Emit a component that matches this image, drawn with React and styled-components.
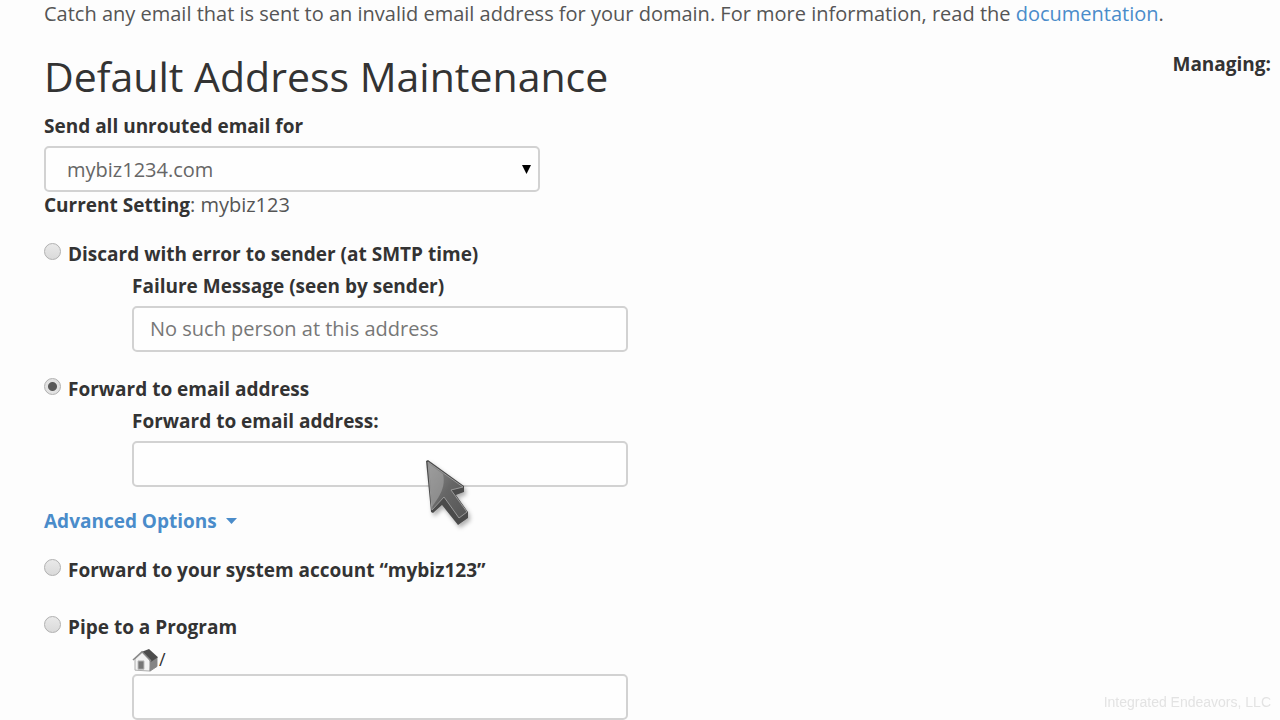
import { useState } from 'react'
import styled, { createGlobalStyle } from 'styled-components'

const GlobalStyle = createGlobalStyle`
  * {
    box-sizing: border-box;
  }

  body {
    margin: 0;
    background: #fdfdfd;
    color: #333333;
    font-family: 'Open Sans', 'Noto Sans', sans-serif;
    font-size: 20px;
    line-height: 26px;
  }
`

const Page = styled.main`
  padding: 1px 9px 0 44px;
`

const Intro = styled.p`
  margin: 0;
  color: #555555;
`

const Link = styled.a`
  color: #4a8cca;
  text-decoration: none;
`

const Header = styled.header`
  display: flex;
  justify-content: space-between;
  align-items: flex-start;
  padding-top: 24px;
`

const Title = styled.h1`
  margin: 0;
  font-size: 41px;
  font-weight: 400;
  line-height: 50px;
`

const Managing = styled.strong`
  font-size: 19px;
  font-weight: 700;
`

const Form = styled.form`
  display: flex;
  flex-direction: column;
  padding-top: 12px;
`

const Label = styled.label`
  display: block;
  font-size: 19px;
  font-weight: 700;
`

const Field = styled.div`
  display: flex;
  flex-direction: column;
  gap: 7px;
  width: 100%;
  max-width: 496px;
`

const Nested = styled(Field)`
  gap: ${props => props.$tight ? '2px' : '7px'};
  margin: 6px 0 0 88px;
`

const SelectBox = styled.div`
  display: grid;
  align-items: center;

  > * {
    grid-area: 1 / 1;
  }

  svg {
    justify-self: end;
    margin-right: 9px;
    pointer-events: none;
  }
`

const Select = styled.select`
  appearance: none;
  width: 100%;
  height: 46px;
  padding: 2px 21px 0;
  border: 2px solid #d2d2d2;
  border-radius: 5px;
  background: #fefefe;
  color: #666666;
  font: inherit;
`

const Input = styled.input`
  width: 100%;
  height: 46px;
  padding: 0 16px 2px;
  border: 2px solid #d2d2d2;
  border-radius: 5px;
  background: #fefefe;
  color: #777777;
  font: inherit;
  outline: none;
`

const Setting = styled.p`
  margin: 0;
  color: #555555;

  strong {
    color: #333333;
    font-size: 19px;
  }
`

const Option = styled.div`
  margin-top: ${props => props.$gap}px;
`

const OptionHead = styled.div`
  display: flex;
  align-items: flex-start;
  gap: 7px;
`

const Radio = styled.input`
  appearance: none;
  flex: none;
  width: 17px;
  height: 17px;
  margin: 2px 0 0;
  border: 1px solid #b0b0b0;
  border-radius: 50%;
  background: linear-gradient(#e9e9e9, #dadada);

  &:checked {
    background: radial-gradient(circle, #5a5a5a 0 4px, #e2e2e2 5px);
  }
`

const Advanced = styled.button`
  display: flex;
  align-items: center;
  gap: 9px;
  align-self: flex-start;
  margin-top: 21px;
  padding: 0;
  border: 0;
  background: none;
  color: #4a8cca;
  font: inherit;
  font-size: 19px;
  font-weight: 700;
`

const Home = styled.div`
  display: flex;
  align-items: flex-end;
  height: 26px;
  font-size: 18px;
`

const Watermark = styled.div`
  position: fixed;
  right: 9px;
  bottom: 5px;
  color: #e3e3e3;
  font-family: 'Liberation Sans', Arial, sans-serif;
  font-size: 14px;
`

const Cursor = styled.svg`
  position: fixed;
  left: 420px;
  top: 456px;
  pointer-events: none;
`

function HomeIcon() {
  return (
    <svg width="27" height="24" viewBox="0 0 27 26" preserveAspectRatio="none" aria-hidden="true">
      <path d="M3 12v12l15 1 1-12-8-9z" fill="#f3f3f3" stroke="#aaa" />
      <path d="M18 13l7-3v10l-7 5z" fill="#858585" stroke="#888" />
      <path d="M10 4l7-3 9 9-7 5z" fill="#4d4d4d" />
      <path d="M1 13l9-9 9 10" fill="none" stroke="#888" strokeWidth="1.5" />
      <path d="M6 14h6v9H6z" fill="#777" stroke="#bbb" />
    </svg>
  )
}

function Pointer() {
  return (
    <Cursor width="56" height="76" viewBox="0 0 56 76" aria-hidden="true">
      <defs>
        <linearGradient id="face" x1="0" y1="0" x2="1" y2="1">
          <stop offset="0" stopColor="#939393" />
          <stop offset="0.5" stopColor="#666666" />
          <stop offset="1" stopColor="#555555" />
        </linearGradient>
        <filter id="shadow" x="-30%" y="-30%" width="170%" height="170%">
          <feDropShadow dx="2" dy="3" stdDeviation="2" floodOpacity="0.3" />
        </filter>
      </defs>
      <path d="M6 5l2-1 36 26v6l-8 3 12 17v6l-10 7-16-20-9 8-2-1z" fill="#4c4c4c" filter="url(#shadow)" />
      <path d="M8 6l35 25-12 3 16 22-8 6-15-21-12 13z" fill="url(#face)" stroke="#999999" />
      <path d="M9 8l14 10c2 8 0 16-5 24l-6 9z" fill="#a5a5a5" opacity="0.6" />
    </Cursor>
  )
}

export default function App() {
  const [action, setAction] = useState('forward')
  const [failure, setFailure] = useState('No such person at this address')

  const radio = (id) => (
    <Radio
      type="radio"
      name="action"
      id={id}
      checked={action === id}
      onChange={() => setAction(id)}
    />
  )

  return (
    <>
      <GlobalStyle />
      <Page>
        <Intro>
          Catch any email that is sent to an invalid email address for your domain. For more information, read the <Link href="#documentation">documentation</Link>.
        </Intro>
        <Header>
          <Title>Default Address Maintenance</Title>
          <Managing>Managing:</Managing>
        </Header>

        <Form>
          <Field>
            <Label htmlFor="domain">Send all unrouted email for</Label>
            <SelectBox>
              <Select id="domain" defaultValue="mybiz1234.com">
                <option>mybiz1234.com</option>
              </Select>
              <svg width="9" height="9" viewBox="0 0 9 9" aria-hidden="true">
                <path d="M0 0h9L4.5 9z" fill="#000" />
              </svg>
            </SelectBox>
          </Field>
          <Setting><strong>Current Setting</strong>: mybiz123</Setting>

          <Option $gap={23}>
            <OptionHead>
              {radio('discard')}
              <Label htmlFor="discard">Discard with error to sender (at SMTP time)</Label>
            </OptionHead>
            <Nested>
              <Label htmlFor="failure">Failure Message (seen by sender)</Label>
              <Input id="failure" type="text" value={failure} onChange={(e) => setFailure(e.target.value)} />
            </Nested>
          </Option>

          <Option $gap={24}>
            <OptionHead>
              {radio('forward')}
              <Label htmlFor="forward">Forward to email address</Label>
            </OptionHead>
            <Nested>
              <Label htmlFor="email">Forward to email address:</Label>
              <Input id="email" type="text" />
            </Nested>
          </Option>

          <Advanced type="button">
            Advanced Options
            <svg width="11" height="6" viewBox="0 0 11 6" aria-hidden="true">
              <path d="M0 0h11L5.5 6z" fill="#4a8cca" />
            </svg>
          </Advanced>

          <Option $gap={23}>
            <OptionHead>
              {radio('system')}
              <Label htmlFor="system">Forward to your system account “mybiz123”</Label>
            </OptionHead>
          </Option>

          <Option $gap={31}>
            <OptionHead>
              {radio('pipe')}
              <Label htmlFor="pipe">Pipe to a Program</Label>
            </OptionHead>
            <Nested $tight>
              <Home><HomeIcon />/</Home>
              <Input type="text" aria-label="Program path" />
            </Nested>
          </Option>
        </Form>
      </Page>
      <Pointer />
      <Watermark>Integrated Endeavors, LLC</Watermark>
    </>
  )
}
